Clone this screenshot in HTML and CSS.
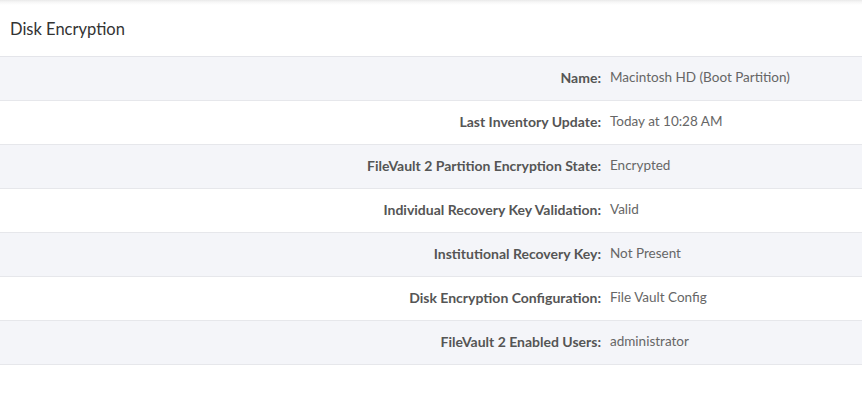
FILE: index.html
```html
<!DOCTYPE html>
<html>
<head>
<meta charset="utf-8">
<link rel="stylesheet" href="styles.css">
</head>
<body>
<div class="panel">
  <div class="header">Disk Encryption</div>
  <div class="rows">
    <div class="row alt"><div class="label">Name:</div><div class="value">Macintosh HD (Boot Partition)</div></div>
    <div class="row"><div class="label">Last Inventory Update:</div><div class="value">Today at 10:28 AM</div></div>
    <div class="row alt"><div class="label">FileVault 2 Partition Encryption State:</div><div class="value">Encrypted</div></div>
    <div class="row"><div class="label">Individual Recovery Key Validation:</div><div class="value">Valid</div></div>
    <div class="row alt"><div class="label">Institutional Recovery Key:</div><div class="value">Not Present</div></div>
    <div class="row"><div class="label">Disk Encryption Configuration:</div><div class="value">File Vault Config</div></div>
    <div class="row alt"><div class="label">FileVault 2 Enabled Users:</div><div class="value">administrator</div></div>
  </div>
</div>
</body>
</html>
```

FILE: styles.css
```css
html, body {
  margin: 0;
  padding: 0;
  background: #ffffff;
}
body {
  font-family: Lato, "Open Sans", "Liberation Sans", sans-serif;
  width: 862px;
  height: 400px;
  overflow: hidden;
}
.panel {
  background: linear-gradient(to bottom, #e9e9e9 0px, #f6f6f6 2px, #ffffff 5px);
  padding-top: 4px;
}
.header {
  height: 53px;
  box-sizing: border-box;
  padding: 15px 0 0 10px;
  font-size: 16.5px;
  color: #333333;
  border-bottom: 1px solid #e4e5ea;
}
.row {
  display: flex;
  height: 44px;
  box-sizing: border-box;
  align-items: center;
  border-bottom: 1px solid #e6e7eb;
  padding-bottom: 3px;
}
.row.alt {
  background: #f4f5f9;
}
.label {
  width: 601px;
  text-align: right;
  font-weight: 700;
  font-size: 14px;
  color: #555555;
}
.value {
  padding-left: 9px;
  font-size: 13.5px;
  color: #666666;
}
```
